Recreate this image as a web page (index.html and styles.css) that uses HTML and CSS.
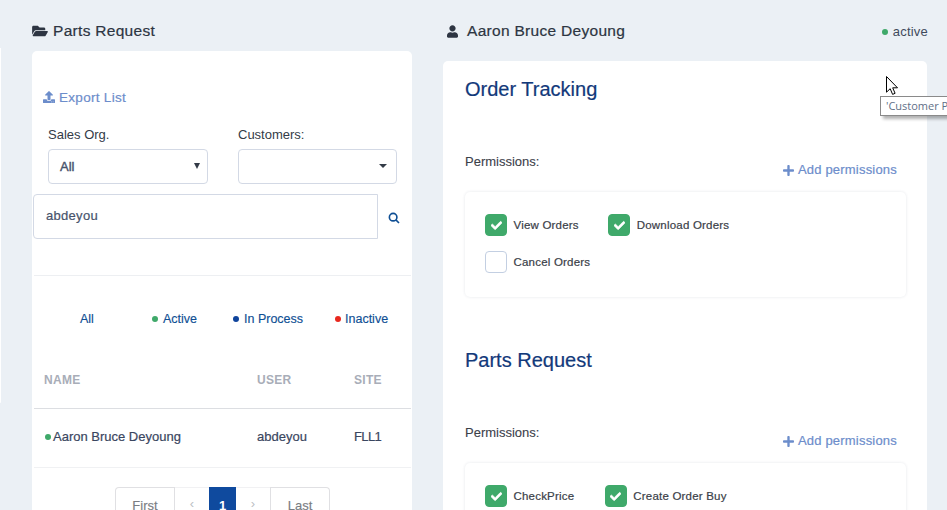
FILE: index.html
```html
<!DOCTYPE html>
<html lang="en">
<head>
    <meta charset="UTF-8">
    <meta name="viewport" content="width=device-width, initial-scale=1.0">
    <title>Parts Request</title>
    <link rel="stylesheet" href="styles.css">
</head>
<body>
    <div class="page">
        <div class="side-sliver"></div>

        <!-- Parts Request list -->
        <section class="list-col">
            <h2 class="col-title">
                <svg class="icon-folder" viewBox="0 0 576 512"><path d="M572.694 292.093L500.27 416.248A63.997 63.997 0 0 1 444.989 448H45.025c-18.523 0-30.064-20.093-20.731-36.093l72.424-124.155A64 64 0 0 1 152 256h399.964c18.523 0 30.064 20.093 20.73 36.093zM152 224h328v-48c0-26.51-21.49-48-48-48H272l-64-64H48C21.49 64 0 85.49 0 112v278.046l69.077-118.418C86.214 242.25 117.989 224 152 224z"/></svg>
                Parts Request
            </h2>
            <div class="list-card">
                <a class="export-link">
                    <svg class="icon-export" viewBox="0 0 512 512"><path d="M296 384h-80c-13.3 0-24-10.7-24-24V192h-87.7c-17.8 0-26.7-21.5-14.1-34.1L242.3 5.7c7.5-7.5 19.8-7.5 27.3 0l152.2 152.2c12.6 12.6 3.7 34.1-14.1 34.1H320v168c0 13.3-10.7 24-24 24zm216-8v112c0 13.3-10.7 24-24 24H24c-13.3 0-24-10.7-24-24V376c0-13.3 10.7-24 24-24h136v8c0 30.9 25.1 56 56 56h80c30.9 0 56-25.1 56-56v-8h136c13.3 0 24 10.7 24 24zm-124 88c0-11-9-20-20-20s-20 9-20 20 9 20 20 20 20-9 20-20zm64 0c0-11-9-20-20-20s-20 9-20 20 9 20 20 20 20-9 20-20z"/></svg>
                    Export List
                </a>

                <div class="filters">
                    <div class="filter filter-org">
                        <label>Sales Org.</label>
                        <div class="select-box">All<span class="arrow arrow-narrow"></span></div>
                    </div>
                    <div class="filter filter-customers">
                        <label>Customers:</label>
                        <div class="select-box"><span class="arrow arrow-wide"></span></div>
                    </div>
                </div>

                <div class="search-row">
                    <div class="search-input">abdeyou</div>
                    <svg class="icon-search" viewBox="0 0 14 14"><circle cx="6" cy="6" r="4.4"/><line x1="9.2" y1="9.2" x2="12.8" y2="12.8"/></svg>
                </div>

                <div class="status-tabs">
                    <a>All</a>
                    <a><span class="dot dot-green"></span>Active</a>
                    <a><span class="dot dot-blue"></span>In Process</a>
                    <a><span class="dot dot-red dot-inactive"></span>Inactive</a>
                </div>

                <table class="user-table">
                    <thead>
                        <tr>
                            <th class="col-name">NAME</th>
                            <th class="col-user">USER</th>
                            <th>SITE</th>
                        </tr>
                    </thead>
                    <tbody>
                        <tr>
                            <td><span class="dot dot-green dot-tight"></span>Aaron Bruce Deyoung</td>
                            <td>abdeyou</td>
                            <td class="cell-site">FLL1</td>
                        </tr>
                    </tbody>
                </table>

                <div class="pager">
                    <a class="page-btn page-first">First</a>
                    <a class="page-btn page-arrow">&lsaquo;</a>
                    <a class="page-btn page-current">1</a>
                    <a class="page-btn page-arrow">&rsaquo;</a>
                    <a class="page-btn page-last">Last</a>
                </div>
            </div>
        </section>

        <!-- Selected user permissions -->
        <section class="detail-col">
            <div class="detail-head">
                <h2 class="col-title">
                    <svg class="icon-user" viewBox="0 0 448 512"><path d="M224 256c70.7 0 128-57.3 128-128S294.7 0 224 0 96 57.3 96 128s57.3 128 128 128zm89.6 32h-16.7c-22.2 10.2-46.9 16-72.9 16s-50.6-5.8-72.9-16h-16.7C60.2 288 0 348.2 0 422.4V464c0 26.5 21.5 48 48 48h352c26.5 0 48-21.5 48-48v-41.6c0-74.2-60.2-134.4-134.4-134.4z"/></svg>
                    Aaron Bruce Deyoung
                </h2>
                <span class="user-status"><span class="dot dot-green"></span>active</span>
            </div>

            <div class="detail-card">
                <div class="module">
                    <h3>Order Tracking</h3>
                    <div class="perm-head">
                        <span class="perm-label">Permissions:</span>
                        <a class="add-link"><svg class="icon-plus" viewBox="0 0 448 512"><path d="M416 208H272V64c0-17.67-14.33-32-32-32h-32c-17.67 0-32 14.33-32 32v144H32c-17.67 0-32 14.33-32 32v32c0 17.67 14.33 32 32 32h144v144c0 17.67 14.33 32 32 32h32c17.67 0 32-14.33 32-32V304h144c17.67 0 32-14.33 32-32v-32c0-17.67-14.33-32-32-32z"/></svg>Add permissions</a>
                    </div>
                    <div class="perm-box">
                        <div class="perm-item perm-view"><span class="check is-on"><svg viewBox="0 0 512 512"><path d="M173.898 439.404l-166.4-166.4c-9.997-9.997-9.997-26.206 0-36.204l36.203-36.204c9.997-9.998 26.207-9.998 36.204 0L192 312.69 432.095 72.596c9.997-9.997 26.207-9.997 36.204 0l36.203 36.204c9.997 9.997 9.997 26.206 0 36.204l-294.4 294.401c-9.998 9.997-26.207 9.997-36.204-.001z"/></svg></span>View Orders</div>
                        <div class="perm-item"><span class="check is-on"><svg viewBox="0 0 512 512"><path d="M173.898 439.404l-166.4-166.4c-9.997-9.997-9.997-26.206 0-36.204l36.203-36.204c9.997-9.998 26.207-9.998 36.204 0L192 312.69 432.095 72.596c9.997-9.997 26.207-9.997 36.204 0l36.203 36.204c9.997 9.997 9.997 26.206 0 36.204l-294.4 294.401c-9.998 9.997-26.207 9.997-36.204-.001z"/></svg></span>Download Orders</div>
                        <div class="perm-item perm-full"><span class="check"></span>Cancel Orders</div>
                    </div>
                </div>

                <div class="module module-next">
                    <h3>Parts Request</h3>
                    <div class="perm-head">
                        <span class="perm-label">Permissions:</span>
                        <a class="add-link"><svg class="icon-plus" viewBox="0 0 448 512"><path d="M416 208H272V64c0-17.67-14.33-32-32-32h-32c-17.67 0-32 14.33-32 32v144H32c-17.67 0-32 14.33-32 32v32c0 17.67 14.33 32 32 32h144v144c0 17.67 14.33 32 32 32h32c17.67 0 32-14.33 32-32V304h144c17.67 0 32-14.33 32-32v-32c0-17.67-14.33-32-32-32z"/></svg>Add permissions</a>
                    </div>
                    <div class="perm-box">
                        <div class="perm-item perm-check"><span class="check is-on"><svg viewBox="0 0 512 512"><path d="M173.898 439.404l-166.4-166.4c-9.997-9.997-9.997-26.206 0-36.204l36.203-36.204c9.997-9.998 26.207-9.998 36.204 0L192 312.69 432.095 72.596c9.997-9.997 26.207-9.997 36.204 0l36.203 36.204c9.997 9.997 9.997 26.206 0 36.204l-294.4 294.401c-9.998 9.997-26.207 9.997-36.204-.001z"/></svg></span>CheckPrice</div>
                        <div class="perm-item"><span class="check is-on"><svg viewBox="0 0 512 512"><path d="M173.898 439.404l-166.4-166.4c-9.997-9.997-9.997-26.206 0-36.204l36.203-36.204c9.997-9.998 26.207-9.998 36.204 0L192 312.69 432.095 72.596c9.997-9.997 26.207-9.997 36.204 0l36.203 36.204c9.997 9.997 9.997 26.206 0 36.204l-294.4 294.401c-9.998 9.997-26.207 9.997-36.204-.001z"/></svg></span>Create Order Buy</div>
                    </div>
                </div>
            </div>
        </section>
    </div>

    <!-- mouse pointer and native tooltip caught in the shot -->
    <svg class="cursor" viewBox="0 0 12 19"><path d="M0.5 0.5V16.2L4.2 12.7L6.6 18.4L9.1 17.3L6.7 11.8H11.5Z"/></svg>
    <div class="native-tip">'Customer Parts Request'</div>
</body>
</html>
```

FILE: styles.css
```css
body {
    margin: 0;
    height: 510px;
    overflow: hidden;
    position: relative;
    background: #ebf0f5;
    font-family: "Liberation Sans", Arial, sans-serif;
    color: #3a4660;
}

a {
    cursor: pointer;
}

.page {
    display: flex;
    align-items: flex-start;
    height: 510px;
    overflow: hidden;
}

.side-sliver {
    flex: none;
    width: 1px;
    height: 355px;
    margin-top: 48px;
    background: #fff;
    border-radius: 0 0 2px 0;
}

/* Columns */
.list-col {
    flex: none;
    width: 380px;
    margin-left: 31px;
}

.detail-col {
    flex: none;
    width: 484px;
    margin-left: 31px;
}

.col-title {
    display: flex;
    align-items: center;
    box-sizing: border-box;
    height: 51px;
    margin: 0;
    padding-top: 11px;
    font-size: 15.5px;
    font-weight: 400;
    letter-spacing: 0.3px;
    color: #2d3542;
    -webkit-text-stroke: 0.2px #2d3542;
}

.col-title svg {
    fill: #2d3542;
}

.icon-folder {
    width: 16px;
    height: 14px;
    margin-right: 5px;
}

.icon-user {
    width: 11px;
    height: 13px;
    margin: 0 9px 0 4px;
}

.detail-head {
    display: flex;
    justify-content: space-between;
    align-items: center;
    height: 61px;
}

.detail-head .col-title {
    height: 61px;
    padding-top: 1px;
}

.user-status {
    margin-top: 1px;
    margin-right: -1px;
    font-size: 13px;
    letter-spacing: 0.2px;
    color: #3f4a5c;
}

/* Dots */
.dot {
    display: inline-block;
    width: 6px;
    height: 6px;
    margin-right: 5px;
    border-radius: 50%;
    vertical-align: 1px;
}

.dot-green { background: #3fa96a; }
.dot-blue { background: #0f449c; }
.dot-red { background: #e8281e; }

.dot-tight {
    margin-right: 2px;
    margin-left: 1px;
}

.dot-inactive {
    margin-right: 4px;
}

/* List card */
.list-card {
    height: 470px;
    padding-top: 37px;
    box-sizing: border-box;
    background: #fff;
    border-radius: 5px;
}

.export-link {
    display: flex;
    align-items: center;
    height: 18px;
    padding-left: 11px;
    font-size: 13.5px;
    font-weight: 400;
    letter-spacing: 0.3px;
    color: #6c8dcb;
    -webkit-text-stroke: 0.2px #6c8dcb;
}

.icon-export {
    width: 12px;
    height: 12px;
    margin-right: 4px;
    fill: #6c8dcb;
}

.filters {
    display: flex;
    margin-top: 21px;
    padding-left: 16px;
}

.filter label {
    display: block;
    height: 15px;
    margin-bottom: 7px;
    font-size: 13px;
    line-height: 15px;
    color: #333b47;
}

.filter-org {
    width: 160px;
    margin-right: 30px;
}

.filter-customers {
    width: 159px;
}

.select-box {
    display: flex;
    align-items: center;
    justify-content: space-between;
    box-sizing: border-box;
    height: 35px;
    padding: 0 7px 1px 11px;
    border: 1px solid #d3d9e5;
    border-radius: 4px;
    font-size: 13px;
    color: #47536b;
    -webkit-text-stroke: 0.4px #47536b;
}

.arrow {
    display: block;
    width: 0;
    height: 0;
    margin-left: auto;
    border-style: solid;
    border-color: #333b47 transparent transparent;
}

.arrow-narrow {
    border-width: 6px 3px 0;
}

.arrow-wide {
    border-width: 4px 4px 0;
    margin-right: 2px;
}

.search-row {
    display: flex;
    align-items: center;
    margin-top: 10px;
    padding-left: 1px;
}

.search-input {
    box-sizing: border-box;
    width: 345px;
    height: 45px;
    padding: 0 0 0 12px;
    border: 1px solid #d3d9e5;
    border-radius: 4px 0 0 4px;
    font-size: 13px;
    line-height: 42px;
    letter-spacing: 0.3px;
    color: #47536b;
    -webkit-text-stroke: 0.2px #47536b;
}

.icon-search {
    width: 12px;
    height: 12px;
    margin: 2px 0 0 10px;
    fill: none;
    stroke: #0f4f94;
    stroke-width: 1.9;
}

.status-tabs {
    display: grid;
    grid-template-columns: 72px 81px 102px auto;
    margin: 36px 1px 0 2px;
    padding: 36px 0 0 46px;
    height: 19px;
    border-top: 1px solid #edeff2;
    font-size: 12.5px;
    line-height: 14px;
    color: #0f4f94;
    -webkit-text-stroke: 0.15px #0f4f94;
}

/* Table */
.user-table {
    width: 377px;
    margin: 0 0 0 2px;
    table-layout: fixed;
    border-collapse: separate;
    border-spacing: 0;
}

.user-table th {
    height: 78px;
    padding: 20px 0 0 10px;
    box-sizing: border-box;
    border-bottom: 1px solid #dcdee2;
    text-align: left;
    font-size: 12px;
    font-weight: 700;
    letter-spacing: 0.3px;
    color: #a8adb8;
}

.user-table .col-name {
    width: 213px;
}

.user-table .col-user {
    width: 97px;
}

.user-table td {
    height: 59px;
    padding: 0 0 3px 10px;
    box-sizing: border-box;
    border-bottom: 1px solid #f0f1f3;
    font-size: 13px;
    color: #3a4660;
    -webkit-text-stroke: 0.2px #3a4660;
}

.user-table .cell-site {
    letter-spacing: -0.6px;
}

/* Pager */
.pager {
    display: flex;
    margin: 19px 0 0 83px;
}

.page-btn {
    box-sizing: border-box;
    height: 34px;
    padding-top: 10px;
    text-align: center;
    font-size: 13px;
    color: #7a7d83;
    border: 1px solid #e0e0e3;
    border-bottom: 0;
    -webkit-text-stroke: 0.15px #7a7d83;
}

.page-first {
    width: 60px;
    border-radius: 4px 0 0 0;
}

.page-arrow {
    width: 34px;
    padding-top: 8px;
    border-color: #f1f1f3;
    border-left: 0;
    border-right: 0;
    color: #bcbfc4;
    -webkit-text-stroke: 0;
}

.page-current {
    width: 27px;
    background: #0f4a9e;
    border-color: #0f4a9e;
    color: #fff;
    font-weight: 700;
    -webkit-text-stroke: 0;
}

.page-last {
    width: 60px;
    border-radius: 0 4px 0 0;
}

/* Detail card */
.detail-card {
    height: 449px;
    padding: 17px 21px 0 22px;
    box-sizing: border-box;
    background: #fff;
    border-radius: 5px 5px 0 0;
}

.module h3 {
    height: 23px;
    margin: 0;
    font-size: 20px;
    font-weight: 400;
    line-height: 23px;
    color: #12397a;
    -webkit-text-stroke: 0.2px #12397a;
}

.module-next {
    margin-top: 52px;
}

.perm-head {
    display: flex;
    justify-content: space-between;
    align-items: flex-start;
    height: 38px;
    margin-top: 53px;
    padding-right: 9px;
}

.perm-label {
    font-size: 13px;
    line-height: 15px;
    color: #3b4049;
    -webkit-text-stroke: 0.1px #3b4049;
}

.add-link {
    display: flex;
    align-items: center;
    margin-top: 8px;
    font-size: 13px;
    line-height: 16px;
    letter-spacing: 0.2px;
    color: #6c8dcb;
    -webkit-text-stroke: 0.2px #6c8dcb;
}

.icon-plus {
    width: 11px;
    height: 13px;
    margin-right: 4px;
    fill: #6c8dcb;
}

.perm-box {
    display: flex;
    flex-wrap: wrap;
    align-content: flex-start;
    gap: 15px 0;
    box-sizing: border-box;
    height: 105px;
    padding: 22px 20px 0;
    border-radius: 5px;
    box-shadow: 0 0 3px rgba(40, 60, 90, 0.12);
}

.perm-item {
    display: flex;
    align-items: center;
    height: 22px;
    font-size: 11.5px;
    letter-spacing: 0.2px;
    color: #3a4048;
    -webkit-text-stroke: 0.2px #3a4048;
}

.perm-view {
    margin-right: 29.5px;
}

.perm-check {
    margin-right: 30.5px;
}

.perm-full {
    width: 100%;
}

.check {
    display: flex;
    align-items: center;
    justify-content: center;
    box-sizing: border-box;
    width: 22px;
    height: 22px;
    margin-right: 6.5px;
    border: 1px solid #c3cfe2;
    border-radius: 4px;
}

.check.is-on {
    background: #3fa96a;
    border-color: #3fa96a;
}

.check svg {
    width: 11px;
    height: 11px;
    fill: #fff;
    stroke: #fff;
    stroke-width: 30;
}

/* Pointer and tooltip sit over the card */
.cursor {
    position: absolute;
    left: 886px;
    top: 76px;
    width: 12px;
    height: 19px;
    fill: #fff;
    stroke: #000;
    stroke-width: 1;
}

.native-tip {
    position: absolute;
    left: 880px;
    top: 96px;
    box-sizing: border-box;
    height: 20px;
    padding: 0 5px;
    background: #fff;
    border: 1px solid #8a8a8a;
    box-shadow: 3px 3px 3px rgba(0, 0, 0, 0.3);
    font-family: "Open Sans", sans-serif;
    font-size: 11px;
    line-height: 18px;
    white-space: nowrap;
    color: #5f7088;
}
```
